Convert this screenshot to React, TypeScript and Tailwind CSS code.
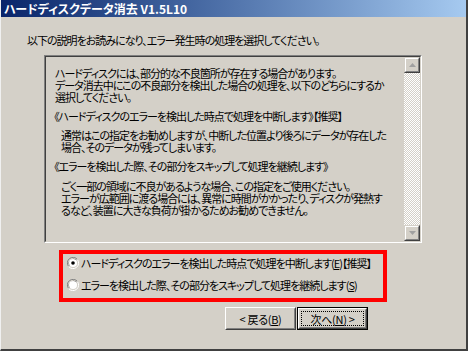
import React from "react";

const font = "font-['Noto_Sans_CJK_JP','Noto_Sans',sans-serif] [font-feature-settings:'palt']";

function Radio({ checked }: { checked?: boolean }) {
  return (
    <svg width="12" height="12" viewBox="0 0 12 12" className="shrink-0">
      <path d="M10.5 2.6 A5.5 5.5 0 0 0 1.5 9.4" fill="none" stroke="#808080" />
      <path d="M9.4 3.3 A4.5 4.5 0 0 0 2.5 8.6" fill="none" stroke="#404040" />
      <path d="M1.6 9.5 A5.5 5.5 0 0 0 10.4 2.5" fill="none" stroke="#ffffff" />
      <path d="M2.6 8.6 A4.5 4.5 0 0 0 9.4 3.4" fill="none" stroke="#d4d0c8" />
      <circle cx="6" cy="6" r="4" fill="#ffffff" />
      {checked && <circle cx="6" cy="6" r="1.8" fill="#000000" />}
    </svg>
  );
}

function ScrollButton({ up }: { up?: boolean }) {
  return (
    <div className="h-[16px] w-[16px] border border-t-[#d4d0c8] border-l-[#d4d0c8] border-r-[#404040] border-b-[#404040] bg-[#d4d0c8]">
      <div className="flex h-full w-full items-center justify-center border border-t-white border-l-white border-r-[#808080] border-b-[#808080]">
        <svg width="7" height="4" viewBox="0 0 7 4">
          {up ? (
            <path d="M3.5 0 L7 4 L0 4 Z" fill="#a0a0a0" />
          ) : (
            <path d="M0 0 L7 0 L3.5 4 Z" fill="#a0a0a0" />
          )}
        </svg>
      </div>
    </div>
  );
}

export default function App() {
  return (
    <div className={`${font} flex h-[351px] w-[468px] flex-col overflow-hidden whitespace-nowrap border-b-2 border-l border-r-2 border-b-[#404040] border-l-[#f0f0f0] border-r-[#404040] bg-[#d4d0c8] text-[11px] leading-[12px] tracking-[-1px] text-black`}>
      <div className="flex h-[17px] shrink-0 items-center bg-gradient-to-r from-[#0a246a] to-[#a6caf0] pl-[3px] text-[12px] font-bold tracking-normal text-white">
        ハードディスクデータ消去 V1.5L10
      </div>

      <div className="pl-[26px] pt-[17px]">以下の説明をお読みになり、エラー発生時の処理を選択してください。</div>

      <div className="ml-[43px] mt-[9px] flex h-[188px] w-[378px] border border-t-[#808080] border-l-[#808080] border-r-white border-b-white">
        <div className="flex flex-1 border border-t-[#404040] border-l-[#404040] border-r-[#d4d0c8] border-b-[#d4d0c8]">
          <div className="flex-1 pl-[9px] pt-[10px]">
            <div>ハードディスクには、部分的な不良箇所が存在する場合があります。</div>
            <div>データ消去中にこの不良部分を検出した場合の処理を、以下のどちらにするか</div>
            <div>選択してください。</div>
            <div className="mt-[7px] -ml-[1px]">《ハードディスクのエラーを検出した時点で処理を中断します》【推奨】</div>
            <div className="mt-[7px] pl-[6px]">通常はこの指定をお勧めしますが、中断した位置より後ろにデータが存在した</div>
            <div className="pl-[6px]">場合、そのデータが残ってしまいます。</div>
            <div className="mt-[7px] -ml-[1px]">《エラーを検出した際、その部分をスキップして処理を継続します》</div>
            <div className="mt-[8px] pl-[6px]">ごく一部の領域に不良があるような場合、この指定をご使用ください。</div>
            <div className="pl-[6px]">エラーが広範囲に渡る場合には、異常に時間がかかったり、ディスクが発熱す</div>
            <div className="pl-[6px]">るなど、装置に大きな負荷が掛かるためお勧めできません。</div>
          </div>
          <div className="flex w-[16px] flex-col justify-between bg-[repeating-conic-gradient(#ffffff_0_25%,#d4d0c8_0_50%)] bg-[length:2px_2px]">
            <ScrollButton up />
            <ScrollButton />
          </div>
        </div>
      </div>

      <div className="ml-[58px] mt-[7px] flex h-[52px] w-[328px] flex-col gap-[4px] border-4 border-[#ff0000]">
        <div className="flex h-[18px] items-center gap-[2px] pl-[4px]">
          <Radio checked />
          <span>
            ハードディスクのエラーを検出した時点で処理を中断します(<span className="underline">E</span>)【推奨】
          </span>
        </div>
        <div className="flex h-[18px] items-center gap-[2px] pl-[4px]">
          <Radio />
          <span>
            エラーを検出した際、その部分をスキップして処理を継続します(<span className="underline">S</span>)
          </span>
        </div>
      </div>

      <div className="ml-[224px] mt-[5px] flex gap-[1px] tracking-[-0.3px]">
        <div className="h-[23px] w-[71px] border border-t-white border-l-white border-r-[#404040] border-b-[#404040]">
          <div className="flex h-full w-full items-center justify-center border border-t-[#d4d0c8] border-l-[#d4d0c8] border-r-[#808080] border-b-[#808080]">
            &lt; 戻る(<span className="underline">B</span>)
          </div>
        </div>
        <div className="h-[23px] w-[71px] border border-black">
          <div className="h-full w-full border border-t-white border-l-white border-r-[#404040] border-b-[#404040]">
            <div className="flex h-full w-full items-center justify-center border border-t-[#d4d0c8] border-l-[#d4d0c8] border-r-[#808080] border-b-[#808080] p-[1px]">
              <div className="flex h-full w-full items-center justify-center border border-dotted border-black">
                次へ(<span className="underline">N</span>) &gt;
              </div>
            </div>
          </div>
        </div>
      </div>
    </div>
  );
}
